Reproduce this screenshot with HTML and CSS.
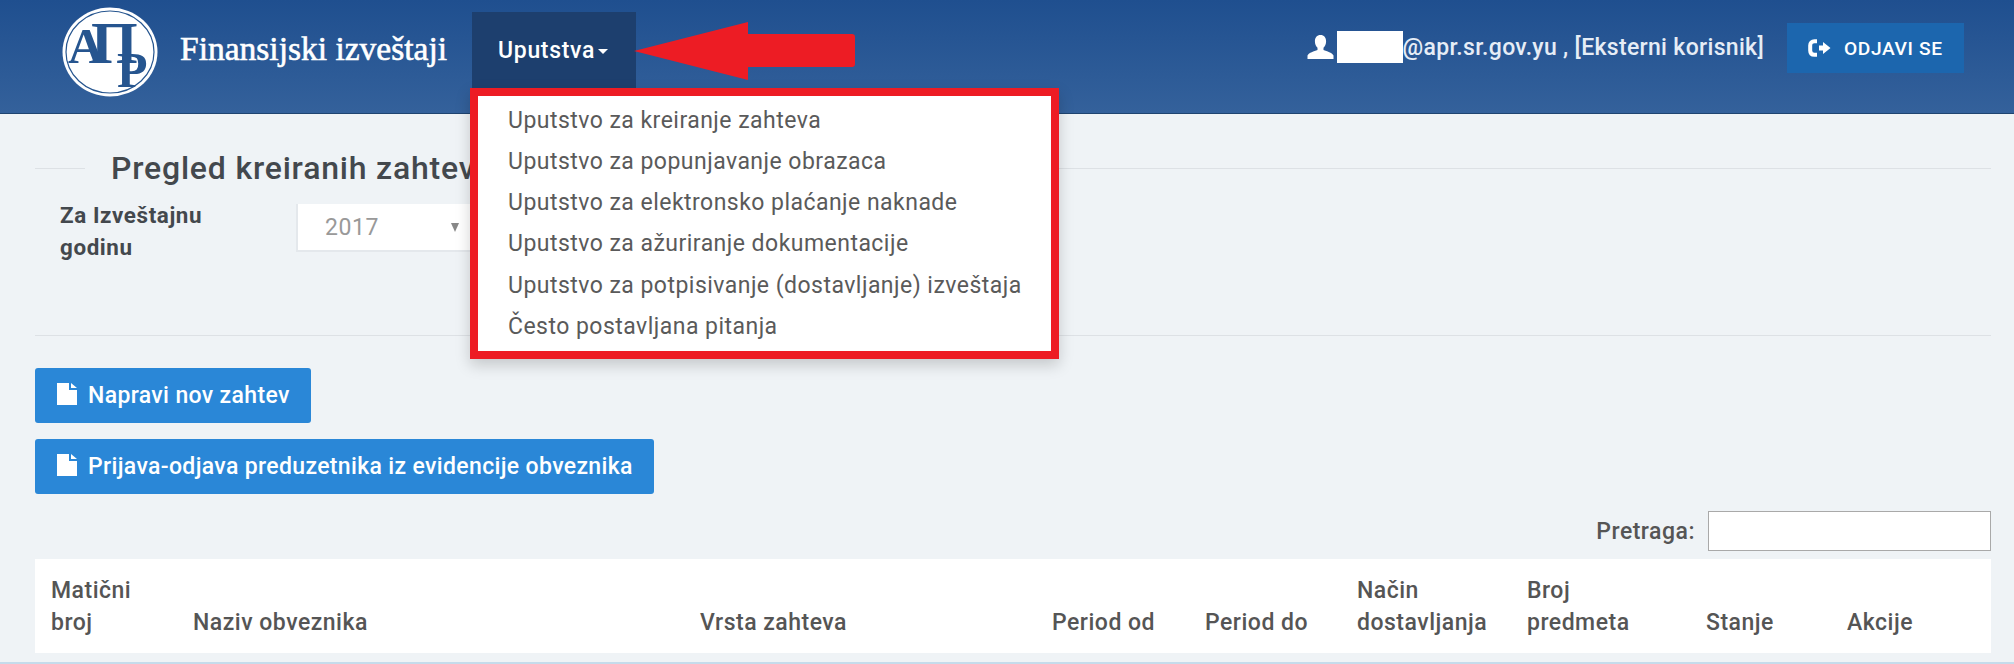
FILE: index.html
```html
<!DOCTYPE html>
<html lang="sr">
<head>
    <meta charset="UTF-8">
    <title>Finansijski izveštaji</title>
    <link rel="stylesheet" href="styles.css">
</head>
<body>
    <header class="topbar">
        <svg class="logo" viewBox="0 0 98 92" width="98" height="92">
            <ellipse cx="48" cy="45" rx="47.500" ry="44.500" fill="#fff"/>
            <ellipse cx="48" cy="45" rx="44" ry="41" fill="none" stroke="#26558f" stroke-width="1.200"/>
            <text class="logo_a" x="6" y="56">A</text>
            <text class="logo_p" x="29" y="56">П</text>
            <text class="logo_r" x="55" y="80">P</text>
        </svg>
        <span class="brand">Finansijski izveštaji</span>
        <a class="nav_item">Uputstva<span class="caret"></span></a>
        <div class="user_box">
            <svg class="user_icon" viewBox="0 0 27 24" width="27" height="24">
                <path d="M13.500 0c3.600 0 5.600 2.700 5.600 6.200 0 2.700-1 5-2.600 6.600v2.200c3.500 1.400 8.500 2.500 10 5.500v3.500H.5V20.500c1.500-3 6.500-4.100 10-5.500v-2.200C8.900 11.200 7.900 8.900 7.900 6.200 7.900 2.700 9.900 0 13.500 0z" fill="#fff"/>
            </svg>
            <span class="user_mask"></span>
            <span class="user_text">@apr.sr.gov.yu , [Eksterni korisnik]</span>
        </div>
        <a class="logout_btn">
            <svg viewBox="0 0 23 18" width="23" height="18">
                <path d="M9 2.200H6.500C3.800 2.200 2.200 3.800 2.200 6.500v5c0 2.700 1.600 4.300 4.300 4.300H9" fill="none" stroke="#fff" stroke-width="4"/>
                <path d="M11 6.500h4V3l7.500 6-7.500 6v-3.500h-4z" fill="#fff"/>
            </svg>
            ODJAVI SE
        </a>
    </header>

    <!-- meni i strelica leže preko sadržaja -->
    <svg class="red_arrow" viewBox="0 0 221 58" width="221" height="58">
        <path d="M0 29 114 0V12H218a3 3 0 0 1 3 3V42a3 3 0 0 1-3 3H114V58z" fill="#ed1c24"/>
    </svg>
    <ul class="drop_menu">
        <li>Uputstvo za kreiranje zahteva</li>
        <li>Uputstvo za popunjavanje obrazaca</li>
        <li>Uputstvo za elektronsko plaćanje naknade</li>
        <li>Uputstvo za ažuriranje dokumentacije</li>
        <li>Uputstvo za potpisivanje (dostavljanje) izveštaja</li>
        <li>Često postavljana pitanja</li>
    </ul>

    <main class="content">
        <h1 class="page_title"><span>Pregled kreiranih zahteva</span></h1>
        <div class="filter_row">
            <label class="filter_label">Za Izveštajnu godinu</label>
            <div class="year_select">2017<span class="select_arrow"></span></div>
        </div>
        <div class="divider"></div>
        <div class="btn_list">
            <a class="blue_btn">
                <svg viewBox="0 0 20 22" width="20" height="22"><path d="M0 0h12v7h8v15H0zM14 0l6 5h-6z" fill="#fff"/></svg>
                Napravi nov zahtev
            </a>
            <a class="blue_btn">
                <svg viewBox="0 0 20 22" width="20" height="22"><path d="M0 0h12v7h8v15H0zM14 0l6 5h-6z" fill="#fff"/></svg>
                Prijava-odjava preduzetnika iz evidencije obveznika
            </a>
        </div>
        <div class="search_row">
            <label class="search_label">Pretraga:</label>
            <input class="search_input" type="text">
        </div>
        <table class="req_table">
            <thead>
                <tr>
                    <th>Matični<br>broj</th>
                    <th>Naziv obveznika</th>
                    <th>Vrsta zahteva</th>
                    <th>Period od</th>
                    <th>Period do</th>
                    <th>Način<br>dostavljanja</th>
                    <th>Broj<br>predmeta</th>
                    <th>Stanje</th>
                    <th>Akcije</th>
                </tr>
            </thead>
        </table>
    </main>
    <div class="page_edge"></div>
</body>
</html>
```

FILE: styles.css
```css
html,body{
    margin:0;
    padding:0;
    height:664px;
    overflow:hidden;
    background:#eff3f6;
    font-family:Roboto,"Liberation Sans",sans-serif;
    color:#555;
}
.topbar{
    display:flex;
    align-items:flex-start;
    box-sizing:border-box;
    height:114px;
    padding:7px 50px 0 62px;
    background:linear-gradient(#1f4f8f,#34619b);
    border-bottom:1px solid #1f4470;
    color:#fff;
}
.logo{
    flex:none;
}
.logo text{
    font-family:"Liberation Serif",serif;
    font-weight:700;
    fill:#26558f;
}
.logo_a{
    font-size:50px;
}
.logo_p{
    font-size:60px;
}
.logo_r{
    font-size:50px;
}
.brand{
    margin:24px 24px 0 20px;
    width:268px;
    font-family:"Liberation Serif",serif;
    font-size:33.500px;
    -webkit-text-stroke:.6px #fff;
    white-space:nowrap;
    line-height:36px;
}
.nav_item{
    display:flex;
    align-items:center;
    box-sizing:border-box;
    margin-top:5px;
    width:164px;
    height:76px;
    padding:0 0 0 26px;
    background:#1d3f6e;
    font-size:23px;
    font-weight:500;
    letter-spacing:.7px;
}
.caret{
    margin:3px 0 0 3px;
    border-top:5px solid #fff;
    border-left:5.500px solid transparent;
    border-right:5.500px solid transparent;
}
.user_box{
    display:flex;
    align-items:center;
    margin:24px 0 0 auto;
}
.user_icon{
    margin-right:3px;
}
.user_mask{
    width:66px;
    height:32px;
    background:#fff;
}
.user_text{
    font-size:23px;
    font-weight:500;
    letter-spacing:.32px;
    color:#e6edf6;
}
.logout_btn{
    display:flex;
    align-items:center;
    gap:13px;
    box-sizing:border-box;
    margin:16px 0 0 23px;
    width:177px;
    height:50px;
    padding-left:21px;
    background:#1c66ae;
    font-size:19.200px;
    font-weight:500;
    letter-spacing:.6px;
}
.red_arrow{
    position:absolute;
    left:634px;
    top:22px;
}
.drop_menu{
    position:absolute;
    left:470px;
    top:88px;
    box-sizing:border-box;
    margin:0;
    width:589px;
    height:271px;
    padding:3.500px 0 0 30px;
    list-style:none;
    background:#fff;
    border:8px solid #ed1c24;
    box-shadow:0 6px 14px rgba(0,0,0,.18);
}
.drop_menu li{
    font-size:23px;
    letter-spacing:.47px;
    line-height:41.300px;
    color:#5a5a5a;
}
.content{
    padding:0 23px 0 35px;
}
.page_title{
    display:flex;
    align-items:center;
    margin:16px 0 0;
    height:76px;
    font-size:32px;
    font-weight:500;
    letter-spacing:.8px;
    color:#43484d;
}
.page_title:before,
.page_title:after{
    content:"";
    height:1px;
    background:#dde1e5;
}
.page_title:before{
    width:50px;
    margin-right:26px;
}
.page_title:after{
    flex:1;
    margin-left:26px;
}
.filter_row{
    display:flex;
    margin-top:-2px;
    height:131px;
    padding-left:25px;
}
.filter_label{
    box-sizing:border-box;
    margin-top:-5px;
    width:236px;
    padding-right:50px;
    font-size:22.400px;
    font-weight:700;
    letter-spacing:.6px;
    line-height:32px;
    color:#43484d;
}
.year_select{
    display:flex;
    align-items:center;
    box-sizing:border-box;
    width:200px;
    height:48px;
    padding:0 22px 0 27px;
    background:#fff;
    border:1px solid #e4e8ec;
    border-width:0 0 2px 2px;
    font-size:23px;
    letter-spacing:.6px;
    color:#999;
}
.select_arrow{
    margin-left:72px;
    border-top:9px solid #888;
    border-left:4px solid transparent;
    border-right:4px solid transparent;
}
.divider{
    height:1px;
    background:#dde1e5;
}
.btn_list{
    display:flex;
    flex-direction:column;
    align-items:flex-start;
    gap:16px;
    margin-top:32px;
}
.blue_btn{
    display:flex;
    align-items:center;
    gap:11px;
    box-sizing:border-box;
    height:55px;
    padding:0 21px 0 22px;
    background:#2a87d7;
    border-radius:3px;
    color:#fff;
    font-size:23px;
    font-weight:500;
    letter-spacing:.35px;
}
.blue_btn svg{
    margin-top:-4px;
}
.search_row{
    display:flex;
    align-items:center;
    justify-content:flex-end;
    gap:13px;
    margin-top:17px;
}
.search_label{
    font-size:23px;
    font-weight:500;
    letter-spacing:.5px;
    color:#555;
}
.search_input{
    box-sizing:border-box;
    margin:0;
    width:283px;
    height:40px;
    padding:0;
    background:#fff;
    border:1px solid #a9a9a9;
}
.req_table{
    margin-top:8px;
    width:1956px;
    height:94px;
    table-layout:fixed;
    border-collapse:collapse;
    background:#fff;
}
.req_table th{
    box-sizing:border-box;
    padding:12px 0 14px 16px;
    font-size:23px;
    font-weight:500;
    letter-spacing:.5px;
    line-height:32px;
    text-align:left;
    vertical-align:bottom;
    color:#555;
}
.req_table th:nth-child(1){width:142px;}
.req_table th:nth-child(2){width:507px;}
.req_table th:nth-child(3){width:352px;}
.req_table th:nth-child(4){width:153px;}
.req_table th:nth-child(5){width:152px;}
.req_table th:nth-child(6){width:170px;}
.req_table th:nth-child(7){width:179px;}
.req_table th:nth-child(8){width:141px;}
.page_edge{
    margin-top:9px;
    height:2px;
    background:#c5dbeb;
}
```
